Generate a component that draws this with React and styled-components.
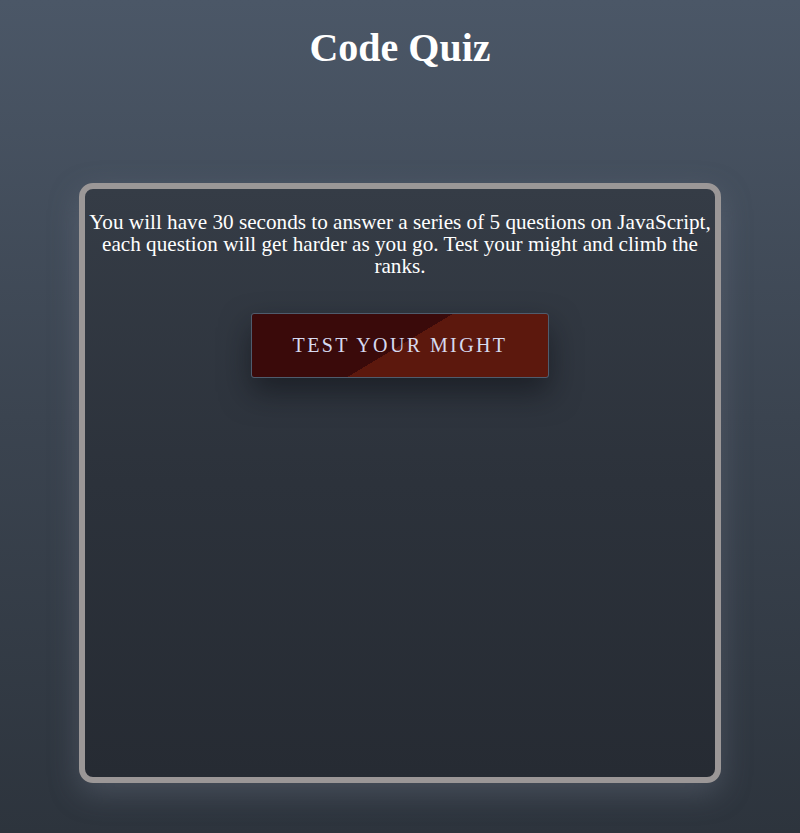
import React from 'react'
import styled, { createGlobalStyle } from 'styled-components'

const Global = createGlobalStyle`
  html, body {
    margin: 0;
    padding: 0;
  }
  body {
    min-height: 100vh;
    background: linear-gradient(180deg, #4b5767 0%, #3b4450 50%, #2d343d 100%);
    font-family: "Liberation Serif", "Times New Roman", serif;
    color: #fff;
  }
`

const Page = styled.div`
  min-height: 833px;
  display: flex;
  flex-direction: column;
  align-items: center;
  padding-top: 24px;
  box-sizing: border-box;
`

const Title = styled.h1`
  margin: 0;
  font-size: 40px;
  font-weight: bold;
  line-height: 48px;
`

const Card = styled.section`
  margin-top: 111px;
  width: 642px;
  height: 600px;
  box-sizing: border-box;
  border: 6px solid #9b9797;
  border-radius: 14px;
  background: linear-gradient(180deg, #353c46 0%, #2c323b 50%, #262b33 100%);
  box-shadow: 0 10px 30px rgba(120, 130, 145, 0.35);
  display: flex;
  flex-direction: column;
  align-items: center;
  padding: 22px 2px 0;
`

const Intro = styled.p`
  margin: 0;
  font-size: 21.2px;
  line-height: 22px;
  text-align: center;
`

const StartButton = styled.button`
  margin-top: 36px;
  width: 298px;
  height: 65px;
  border: 1px solid #4f5c6d;
  border-radius: 3px;
  background: linear-gradient(149deg, #3a0a0a 0%, #3a0a0a 50%, #5c180d 50%, #5c180d 100%);
  color: #d6daf0;
  font-family: "Liberation Serif", "Times New Roman", serif;
  font-size: 20px;
  letter-spacing: 2.4px;
  text-transform: uppercase;
  box-shadow: 0 14px 30px rgba(12, 15, 20, 0.55);
  cursor: pointer;
`

export default function App() {
  return (
    <>
      <Global />
      <Page>
        <Title>Code Quiz</Title>
        <Card>
          <Intro>
            You will have 30 seconds to answer a series of 5 questions on JavaScript, each question will get harder as you go. Test your might and climb the ranks.
          </Intro>
          <StartButton>Test Your Might</StartButton>
        </Card>
      </Page>
    </>
  )
}
